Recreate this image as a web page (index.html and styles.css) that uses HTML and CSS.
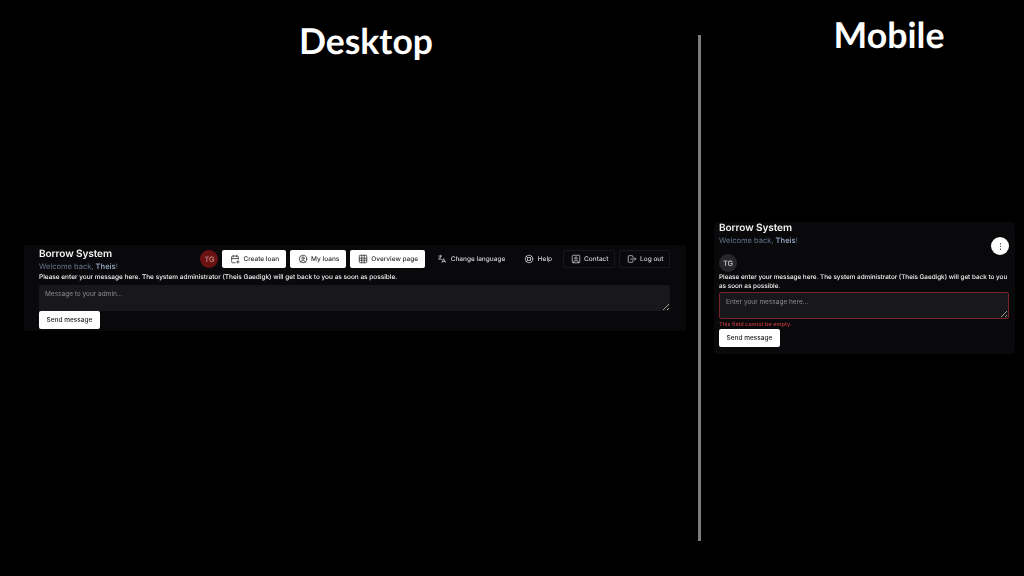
FILE: index.html
```html
<!DOCTYPE html>
<html lang="en">
<head>
  <meta charset="UTF-8">
  <title>Borrow System - Desktop and Mobile</title>
  <link rel="stylesheet" href="styles.css">
</head>
<body>
  <svg class="sprite" aria-hidden="true">
    <symbol id="i-calendar" viewBox="0 0 24 24"><path d="M12.5 21h-6.5a2 2 0 0 1 -2 -2v-12a2 2 0 0 1 2 -2h12a2 2 0 0 1 2 2v5M16 3v4M8 3v4M4 11h16M16 19h6M19 16v6"/></symbol>
    <symbol id="i-user" viewBox="0 0 24 24"><circle cx="12" cy="12" r="9"/><circle cx="12" cy="10" r="3"/><path d="M6.168 18.849a4 4 0 0 1 3.832 -2.849h4a4 4 0 0 1 3.834 2.855"/></symbol>
    <symbol id="i-table" viewBox="0 0 24 24"><path d="M3 5a2 2 0 0 1 2 -2h14a2 2 0 0 1 2 2v14a2 2 0 0 1 -2 2h-14a2 2 0 0 1 -2 -2zM3 10h18M3 15h18M9 3v18M15 3v18"/></symbol>
    <symbol id="i-language" viewBox="0 0 24 24"><path d="M4 5h7M9 3v2c0 4.418 -2.239 8 -5 8M5 9c0 2.144 2.952 3.908 6.7 4M12 20l4 -9l4 9M19.1 18h-6.2"/></symbol>
    <symbol id="i-help" viewBox="0 0 24 24"><circle cx="12" cy="12" r="4"/><circle cx="12" cy="12" r="9"/><path d="M15 15l3.35 3.35M9 15l-3.35 3.35M5.65 5.65l3.35 3.35M18.35 5.65l-3.35 3.35"/></symbol>
    <symbol id="i-contact" viewBox="0 0 24 24"><path d="M9 10a3 3 0 1 0 6 0a3 3 0 0 0 -6 0M6 21v-1a4 4 0 0 1 4 -4h4a4 4 0 0 1 4 4v1M3 5a2 2 0 0 1 2 -2h14a2 2 0 0 1 2 2v14a2 2 0 0 1 -2 2h-14a2 2 0 0 1 -2 -2z"/></symbol>
    <symbol id="i-logout" viewBox="0 0 24 24"><path d="M14 8v-2a2 2 0 0 0 -2 -2h-7a2 2 0 0 0 -2 2v12a2 2 0 0 0 2 2h7a2 2 0 0 0 2 -2v-2M9 12h12l-3 -3M18 15l3 -3"/></symbol>
    <symbol id="i-dots" viewBox="0 0 24 24"><path d="M12 5v.01M12 12v.01M12 19v.01"/></symbol>
  </svg>

  <div class="desktop">
    <h1 class="titel titel-desktop">Desktop</h1>
    <div class="panel panel-desktop">
      <div class="kopf">
        <div>
          <h2>Borrow System</h2>
          <p class="welcome">Welcome back, <b>Theis</b>!</p>
        </div>
        <nav class="menu">
          <span class="avatar avatar-red">TG</span>
          <a class="btn btn-light"><svg><use href="#i-calendar"/></svg>Create loan</a>
          <a class="btn btn-light"><svg><use href="#i-user"/></svg>My loans</a>
          <a class="btn btn-light"><svg><use href="#i-table"/></svg>Overview page</a>
          <a class="btn btn-plain"><svg><use href="#i-language"/></svg>Change language</a>
          <a class="btn btn-plain"><svg><use href="#i-help"/></svg>Help</a>
          <a class="btn btn-dark"><svg><use href="#i-contact"/></svg>Contact</a>
          <a class="btn btn-dark"><svg><use href="#i-logout"/></svg>Log out</a>
        </nav>
      </div>
      <p class="hinweis">Please enter your message here. The system administrator (Theis Gaedigk) will get back to you as soon as possible.</p>
      <textarea class="feld" placeholder="Message to your admin..."></textarea>
      <button class="btn btn-light senden">Send message</button>
    </div>
  </div>

  <div class="trenner"></div>

  <div class="mobile">
    <h1 class="titel titel-mobile">Mobile</h1>
    <div class="panel panel-mobile">
      <div class="kopf">
        <div>
          <h2>Borrow System</h2>
          <p class="welcome">Welcome back, <b>Theis</b>!</p>
        </div>
        <button class="kebab"><svg><use href="#i-dots"/></svg></button>
      </div>
      <span class="avatar avatar-grey">TG</span>
      <p class="hinweis">Please enter your message here. The system administrator (Theis Gaedigk) will get back to you as soon as possible.</p>
      <textarea class="feld feld-fehler" placeholder="Enter your message here..."></textarea>
      <p class="fehler">This field cannot be empty.</p>
      <button class="btn btn-light senden">Send message</button>
    </div>
  </div>
</body>
</html>
```

FILE: styles.css
```css
* {
  box-sizing: border-box;
}

body {
  margin: 0;
  width: 1024px;
  height: 576px;
  overflow: hidden;
  background: #000;
  color: #fff;
  font-family: Inter, "Liberation Sans", sans-serif;
  text-rendering: geometricPrecision;
  display: flex;
}

.sprite {
  display: none;
}

.desktop {
  width: 698px;
  padding-left: 24px;
  padding-right: 12px;
}

.mobile {
  width: 323px;
  padding-left: 13px;
  padding-right: 9px;
}

.trenner {
  width: 3px;
  height: 506px;
  margin-top: 35px;
  background: #7d7d7d;
  filter: blur(0.3px);
}

.titel {
  margin: 0;
  font-family: Lato, sans-serif;
  font-weight: 700;
  line-height: 40px;
  text-align: center;
}

.titel-desktop {
  font-size: 35.5px;
  padding-left: 22px;
  margin-top: 21px;
  margin-bottom: 184px;
}

.titel-mobile {
  font-size: 35.7px;
  padding-left: 49px;
  margin-top: 15px;
  margin-bottom: 167px;
}

/* the source picture is a soft, scaled down capture */
.panel {
  background: #09090b;
  border-radius: 3px;
  filter: blur(0.35px);
}

.panel-desktop {
  height: 86px;
  padding: 2.5px 16px 0 15px;
}

.panel-mobile {
  height: 132px;
  padding: 0 6px 0 5px;
}

.kopf {
  display: flex;
  justify-content: space-between;
  align-items: center;
}

h2 {
  margin: 0;
  font-size: 10.1px;
  line-height: 13px;
  font-weight: 600;
  letter-spacing: -0.1px;
  color: #f4f4f5;
}

.welcome {
  margin: 1.5px 0 0;
  font-size: 7.5px;
  line-height: 10px;
  color: #64748b;
}

.welcome b {
  color: #8d9cb4;
  font-weight: 600;
}

.menu {
  display: flex;
  align-items: center;
  gap: 4px;
  margin-bottom: 1px;
}

.avatar {
  width: 18px;
  height: 18px;
  border-radius: 50%;
  display: flex;
  align-items: center;
  justify-content: center;
  font-size: 7.4px;
}

.avatar-red {
  background: #6b1212;
  color: #d8a5a5;
}

.avatar-grey {
  background: #27272a;
  color: #e4e4e7;
  margin-top: 8px;
}

.btn {
  height: 18px;
  display: flex;
  align-items: center;
  justify-content: center;
  gap: 3.5px;
  padding: 0 7px 0 7.5px;
  border-radius: 2px;
  border: 0;
  font-family: inherit;
  font-size: 6.5px;
  font-weight: 500;
  white-space: nowrap;
}

.btn svg {
  width: 10px;
  height: 10px;
  fill: none;
  stroke: currentColor;
  stroke-width: 1.8;
  stroke-linecap: round;
  stroke-linejoin: round;
}

.btn-light {
  background: #fff;
  color: #27272a;
}

.btn-plain {
  padding: 0 7px 0 8px;
  color: #d4d4d8;
}

.btn-dark {
  padding: 0 5.5px 0 6.5px;
  background: #09090b;
  color: #d4d4d8;
  border: 1px solid #18181b;
}

.hinweis {
  margin: 0.5px 0 0;
  font-size: 6.47px;
  line-height: 9.2px;
  font-weight: 500;
  color: #f4f4f5;
}

.feld {
  display: block;
  width: 100%;
  height: 26px;
  margin: 2.9px 0 0;
  padding: 5px 6px;
  border: 0;
  border-radius: 2px;
  background: #18181b;
  font-family: inherit;
  font-size: 6.5px;
  color: #fff;
}

.feld::placeholder {
  color: #8b8b92;
}

.feld-fehler {
  height: 27px;
  margin-top: 0.9px;
  border: 1px solid #7a2226;
}

.fehler {
  margin: 3px 0 0;
  font-size: 5.6px;
  line-height: 7px;
  font-weight: 500;
  color: #c23a3f;
}

.senden {
  width: 61px;
  padding: 0;
}

.panel-mobile h2 {
  line-height: 12px;
}

.panel-mobile .welcome {
  margin-top: 2px;
}

.panel-mobile .hinweis {
  margin-top: 0.7px;
  font-size: 6.35px;
}

.kebab {
  width: 18px;
  height: 18px;
  align-self: flex-start;
  margin: 15px 0 -9px;
  padding: 0;
  border: 0;
  border-radius: 50%;
  background: #fff;
  color: #18181b;
  display: flex;
  align-items: center;
  justify-content: center;
}

.kebab svg {
  width: 9px;
  height: 9px;
  fill: none;
  stroke: currentColor;
  stroke-width: 3;
  stroke-linecap: round;
}
```
